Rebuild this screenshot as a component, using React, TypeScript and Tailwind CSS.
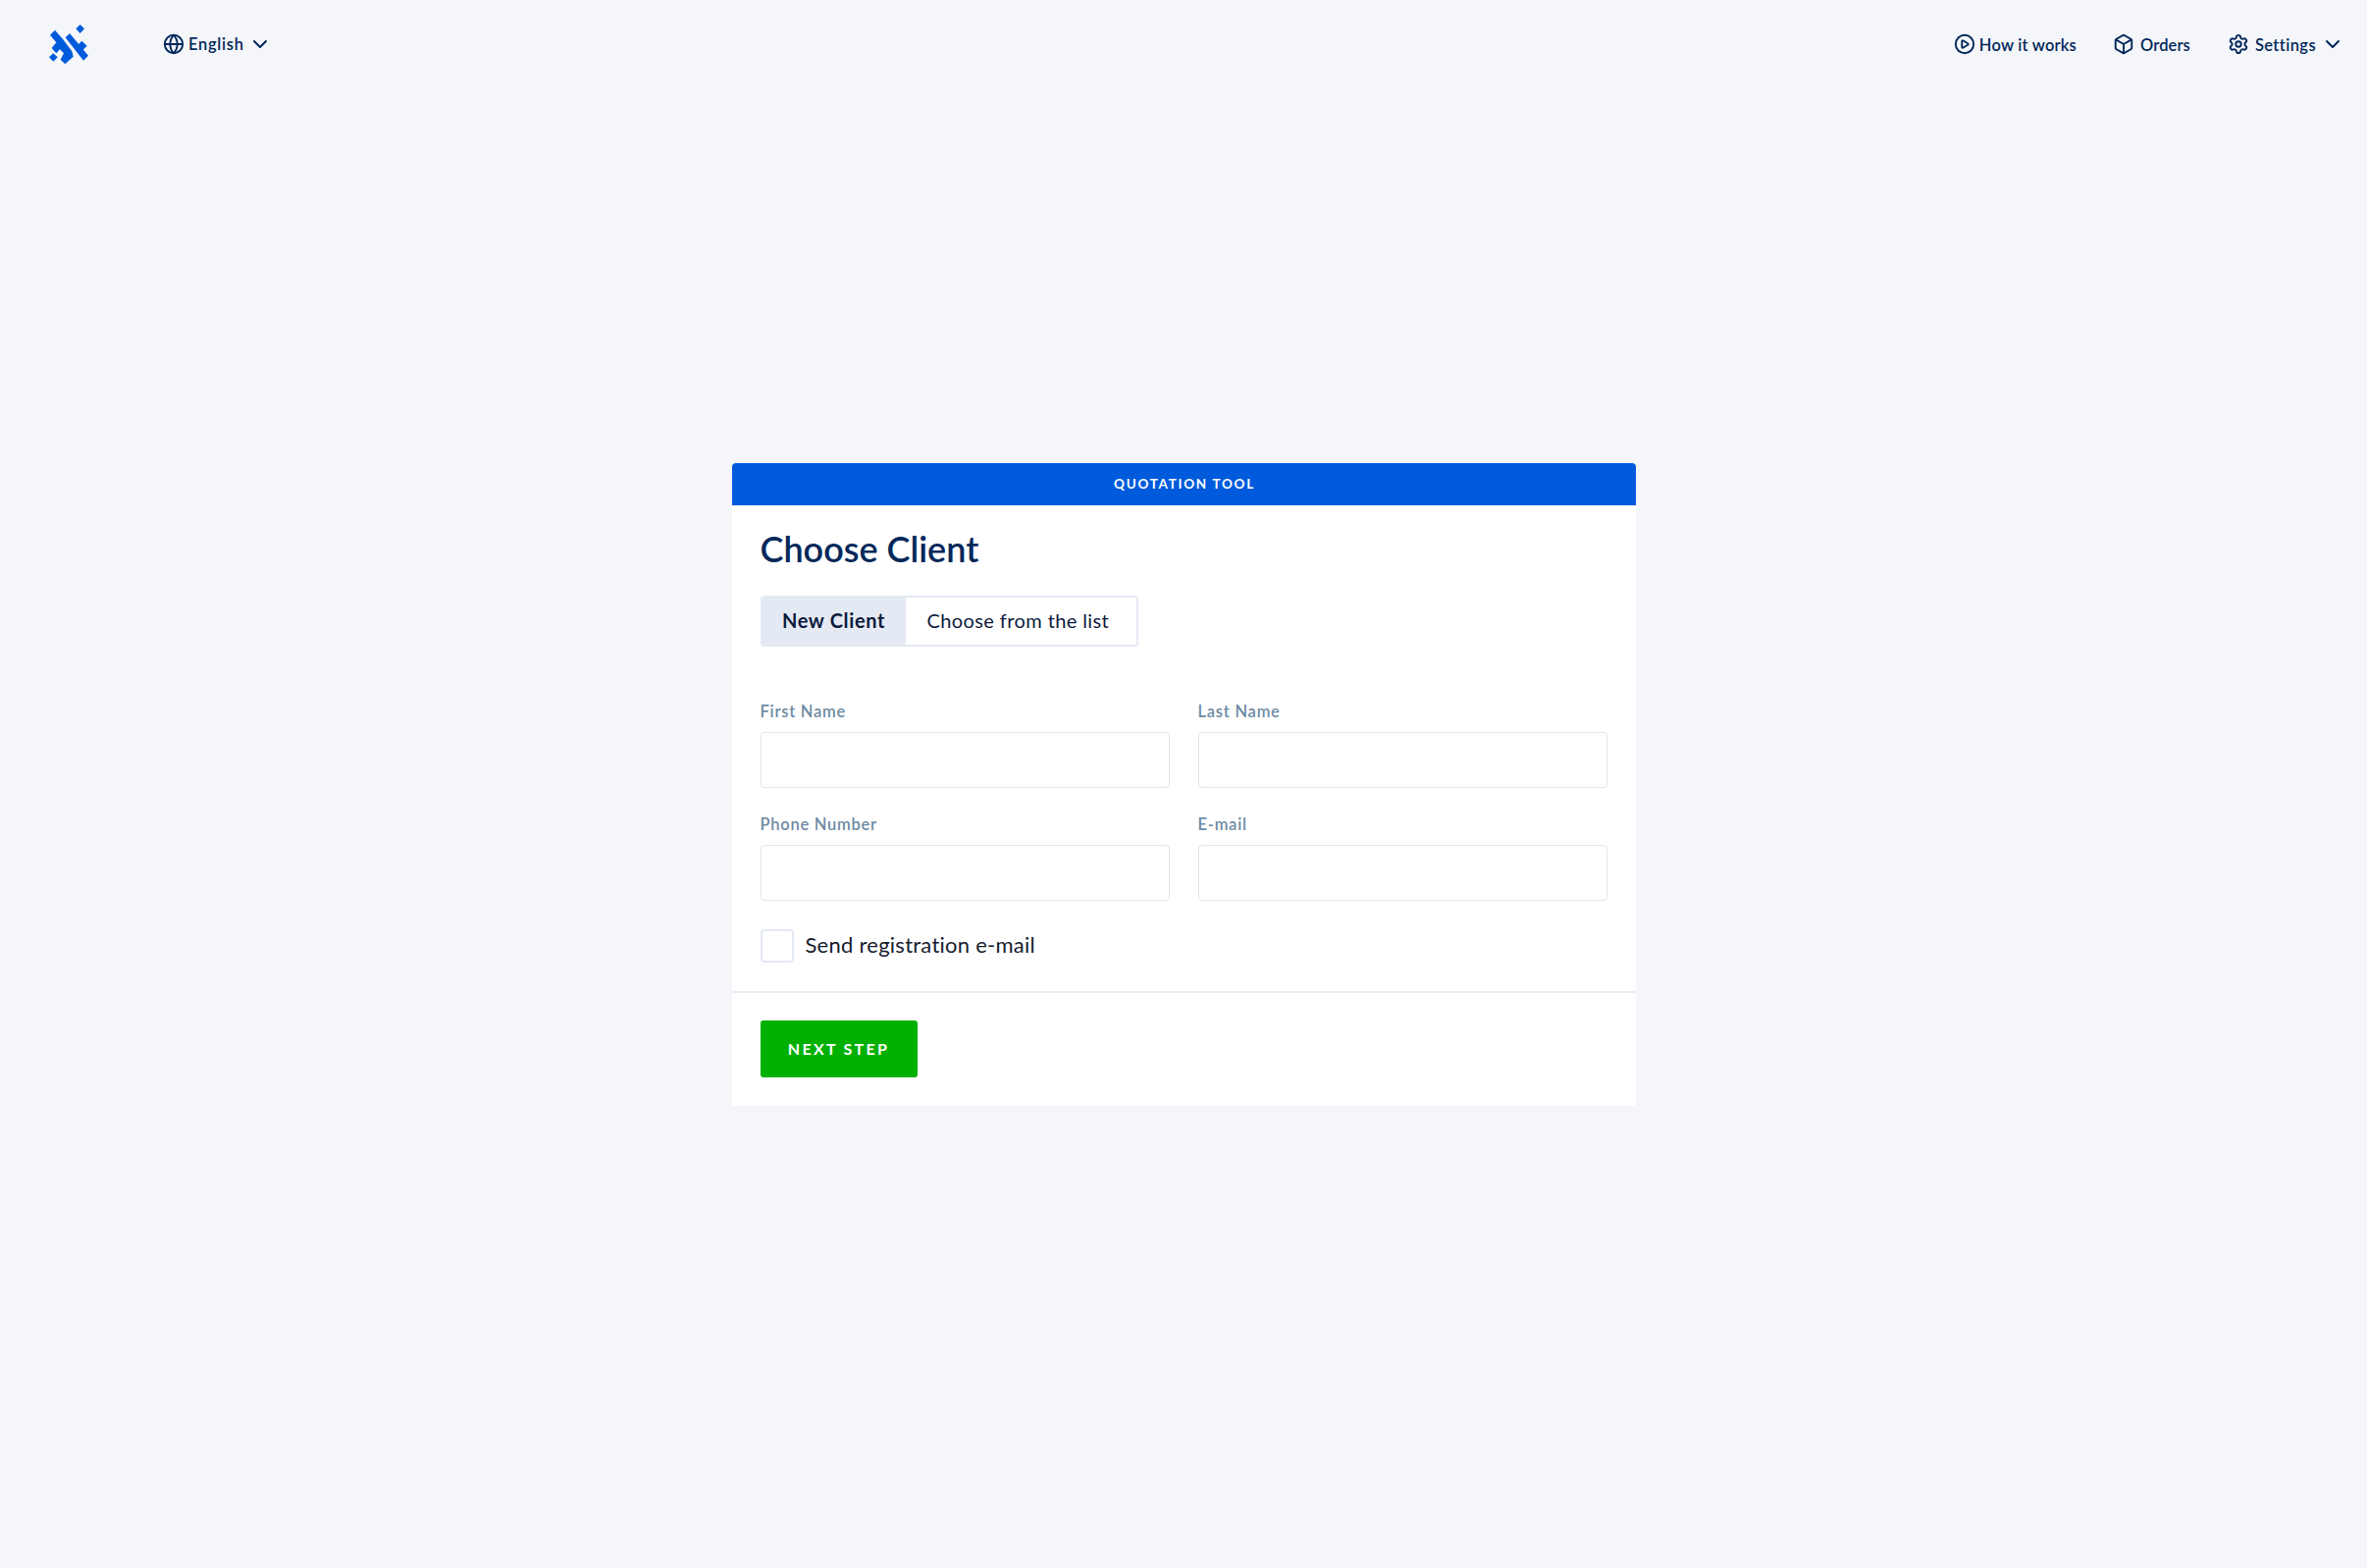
import React from 'react';
import { Globe, ChevronDown, CirclePlay, Box, Settings } from 'lucide-react';

const Logo = () => (
  <svg width="60" height="60" viewBox="0 0 180 180" className="shrink-0">
    <g fill="#005bdc">
      <polygon points="125,30 138,43 125,57 112,43" />
      <polygon points="33,62 48,47 73,76 100,112 104,128 79,151 65,137 75,118 63,106 52,118 38,102 52,85" />
      <polygon points="80,70 93,57 150,125 135,140" />
      <polygon points="114,96 130,80 146,95 128,113" />
      <polygon points="43,118 56,130 43,143 30,130" />
    </g>
  </svg>
);

const Field = ({ label }: { label: string }) => (
  <div>
    <label className="block h-[21px] text-[16.5px] leading-[21px] font-semibold tracking-[0.75px] text-[#6d8ba4]">{label}</label>
    <input className="mt-[10px] block h-[57px] w-full rounded-[4px] border border-[#dfe6ef] bg-white" />
  </div>
);

export default function App() {
  return (
    <div className="min-h-screen bg-[#f4f6fa] font-['Lato',sans-serif]">
      <header className="flex h-[90px] items-center pr-[23px] pl-[40px] text-[#03285a]">
        <Logo />
        <div className="ml-[66px] flex items-center text-[16.5px] font-semibold">
          <Globe className="h-[22px] w-[22px]" strokeWidth={2.1} />
          <span className="ml-[4px] tracking-[0.7px]">English</span>
          <ChevronDown className="ml-[4px] h-[24px] w-[24px]" strokeWidth={2} />
        </div>
        <nav className="ml-auto flex items-center text-[16.5px] font-semibold">
          <CirclePlay className="h-[22px] w-[22px]" strokeWidth={2.1} />
          <span className="ml-[4px] pt-[2px] tracking-[0.2px]">How it works</span>
          <Box className="ml-[37px] h-[22px] w-[22px]" strokeWidth={2.1} />
          <span className="ml-[6px] pt-[2px] tracking-[0.1px]">Orders</span>
          <Settings className="ml-[38px] h-[22px] w-[22px]" strokeWidth={2.1} />
          <span className="ml-[6px] pt-[2px] tracking-[0.4px]">Settings</span>
          <ChevronDown className="ml-[5px] h-[24px] w-[24px]" strokeWidth={2} />
        </nav>
      </header>

      <main className="mx-auto mt-[382px] w-[921px] overflow-hidden rounded-t-[4px] rounded-b-[2px] bg-white">
        <div className="flex h-[43px] items-center justify-center bg-[#005bdc] pl-[2px] text-[13.5px] font-bold tracking-[1.7px] text-white">
          QUOTATION TOOL
        </div>
        <div className="px-[29px] pt-[22px]">
          <h1 className="h-[44px] text-[36px] leading-[44px] font-semibold text-[#03285a]">Choose Client</h1>
          <div className="mt-[26px] flex h-[52px] w-[385px] overflow-hidden rounded-[4px] border-2 border-[#e4eaf3] text-[20px]">
            <div className="flex w-[146px] items-center justify-center bg-[#e4eaf3] pb-[2px] font-bold tracking-[0.65px] text-[#0d1b3e]">New Client</div>
            <div className="flex flex-1 items-center pb-[2px] pl-[22px] tracking-[0.4px] text-[#0d1b3e]">Choose from the list</div>
          </div>
          <div className="mt-[56px] grid grid-cols-2 gap-x-[29px] gap-y-[27px]">
            <Field label="First Name" />
            <Field label="Last Name" />
            <Field label="Phone Number" />
            <Field label="E-mail" />
          </div>
          <div className="mt-[29px] flex items-center">
            <div className="h-[34px] w-[34px] rounded-[4px] border-2 border-[#e4eaf3] bg-white" />
            <span className="ml-[12px] pb-[3px] text-[22px] leading-[28px] tracking-[0.25px] text-[#17202e]">Send registration e-mail</span>
          </div>
        </div>
        <div className="mt-[29px] border-t-2 border-[#e9eef4] px-[29px] pt-[28px] pb-[29px]">
          <button className="block h-[58px] w-[160px] rounded-[3px] bg-[#00b000] text-[16px] font-bold tracking-[2.3px] text-white">
            NEXT STEP
          </button>
        </div>
      </main>
    </div>
  );
}
